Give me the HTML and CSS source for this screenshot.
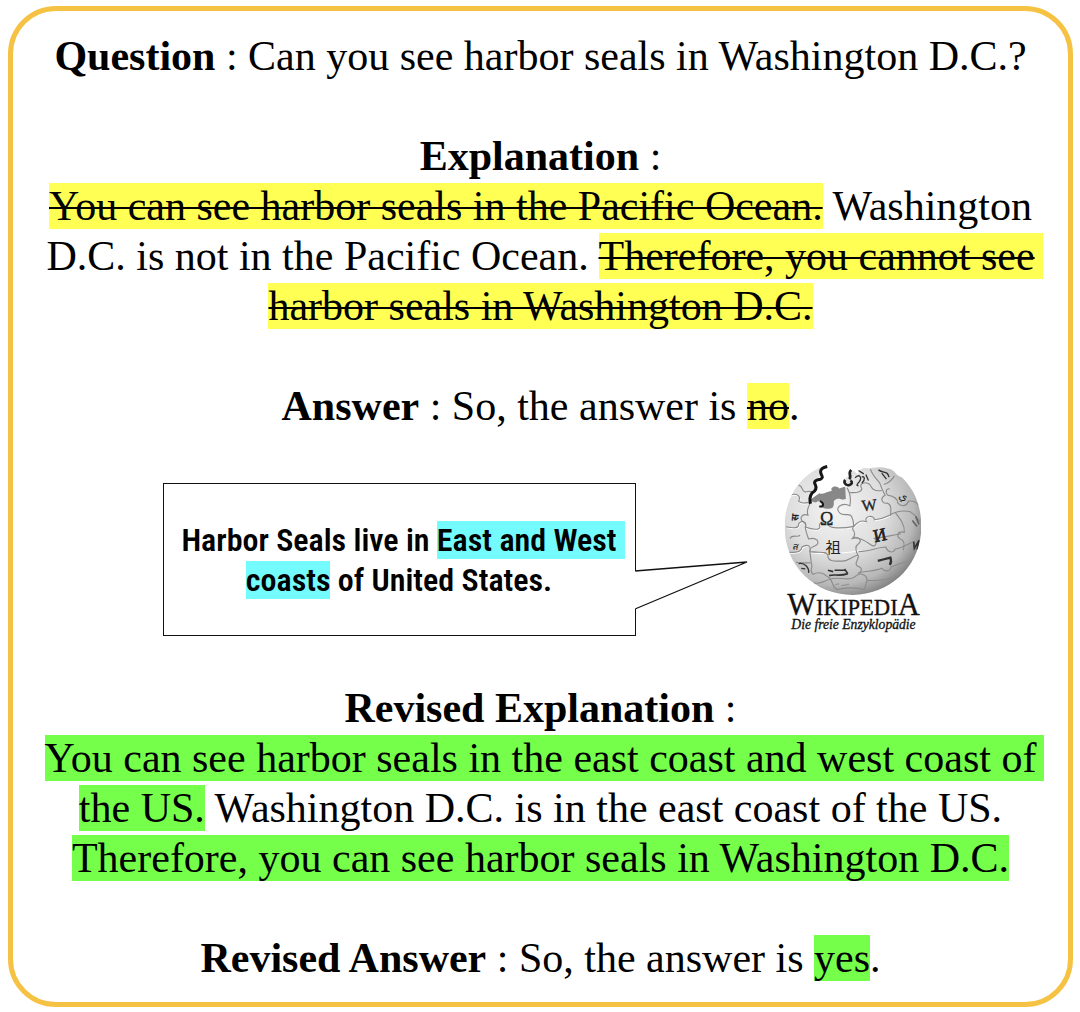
FILE: index.html
```html
<!DOCTYPE html>
<html lang="en">
<head>
<meta charset="utf-8">
<title>Harbor seals</title>
<link rel="stylesheet" href="styles.css">
</head>
<body>
<main class="card">
  <p class="block"><b>Question</b> : Can you see harbor seals in Washington D.C.?</p>

  <p class="block"><b>Explanation</b> :<br>
    <del class="wrong">You can see harbor seals in the Pacific Ocean.</del> Washington<br>
    D.C. is not in the Pacific Ocean. <del class="wrong line-end">Therefore, you cannot see</del><br>
    <del class="wrong">harbor seals in Washington D.C.</del></p>

  <p class="block"><b>Answer</b> : So, the answer is <del class="wrong">no</del>.</p>

  <section class="evidence">
    <p class="bubble">Harbor Seals live in <mark class="fact line-end">East and West</mark><br><mark class="fact">coasts</mark> of United States.</p>
    <svg class="tail" viewBox="0 0 114 52" aria-hidden="true">
      <path d="M1 11 L113 2 L1 49" fill="#fff" stroke="#111" stroke-width="1.3"/>
      <path d="M0 11.5 V48.5" stroke="#fff" stroke-width="3"/>
    </svg>
    <svg class="logo" viewBox="40 24 412 522" role="img" aria-label="Wikipedia">
      <defs>
        <radialGradient id="ball" cx="0.38" cy="0.36" r="0.7">
          <stop offset="0" stop-color="#f4f4f4"/>
          <stop offset="0.5" stop-color="#dedede"/>
          <stop offset="0.8" stop-color="#b8b8b8"/>
          <stop offset="1" stop-color="#777"/>
        </radialGradient>
        <clipPath id="globe"><path d="M150 36 C85 64 42 130 42 215 C42 335 134 420 247 420 C362 420 453 330 453 215 C453 150 430 100 394 66 C376 64 374 42 352 40 C330 32 306 38 292 40 C274 34 264 48 262 58 C246 38 234 44 232 64 C214 74 218 84 232 96 L150 124 L118 146 C112 130 120 114 134 104 C136 94 124 84 134 74 C142 66 154 66 150 54 Z"/></clipPath>
      </defs>
      <g clip-path="url(#globe)">
        <rect x="40" y="20" width="416" height="402" fill="url(#ball)"/>
        <g fill="none" stroke="#fff" stroke-width="3" transform="translate(2 3)">
          <path d="M58 120 C80 112 92 124 84 138 C98 152 108 136 118 146"/>
          <path d="M46 215 C70 220 86 220 84 206 C96 192 110 202 104 216 C126 224 146 226 148 216 C140 202 166 194 174 208 C172 222 220 220 250 214 C262 200 272 194 288 200 C278 182 312 178 312 194 C340 190 350 184 358 180"/>
          <path d="M56 292 C86 292 92 288 94 276 C110 266 122 272 118 290 C160 296 220 292 270 284"/>
        </g>
        <g fill="none" stroke="#8c8c8c" stroke-width="3.4">
          <path d="M58 120 C80 112 92 124 84 138 C98 152 108 136 118 146"/>
          <path d="M118 146 C110 160 108 168 112 180 C92 174 84 192 100 202 C108 208 106 216 104 218"/>
          <path d="M46 215 C70 220 86 220 84 206 C96 192 110 202 104 216 C126 224 146 226 148 216 C140 202 166 194 174 208 C172 222 220 220 250 214 C262 200 272 194 288 200 C278 182 312 178 312 194 C340 190 350 184 358 180"/>
          <path d="M228 96 C238 110 242 130 238 152 C214 140 190 158 208 174 C220 186 240 170 244 186 C250 200 250 214 246 222"/>
          <path d="M238 112 C260 114 274 110 274 100 C262 84 286 78 298 88 C304 100 310 110 334 106"/>
          <path d="M300 42 C306 62 320 72 328 84 C334 100 338 110 344 120 C326 130 336 146 350 144 C364 148 362 166 360 182"/>
          <path d="M372 62 C364 76 354 84 340 88 M358 102 C350 98 342 108 352 120 C376 124 382 134 382 144 C396 158 412 150 414 138 C430 136 438 140 444 150"/>
          <path d="M358 180 C382 166 402 166 420 170 C436 180 442 190 450 200 M374 172 C390 192 404 210 402 232 C380 226 376 246 394 254 C404 260 402 274 398 286"/>
          <path d="M104 218 C106 232 112 246 114 252 C132 246 148 256 140 268 C130 278 118 272 118 290 C120 304 120 312 122 322"/>
          <path d="M56 292 C86 292 92 288 94 276 C110 266 122 272 118 290 C150 294 166 288 172 300 C170 318 190 320 210 318 C230 322 236 308 262 300"/>
          <path d="M246 222 C258 236 250 246 246 250 C270 244 274 258 264 266 C252 274 256 290 264 304 C262 318 250 326 262 334 C280 340 272 350 262 360"/>
          <path d="M250 246 C280 252 290 262 302 270 C314 280 324 260 312 250 C340 248 366 240 392 236"/>
          <path d="M264 290 C296 290 324 276 346 276 C350 290 370 298 374 282 C390 282 412 266 430 260"/>
          <path d="M76 322 C96 326 122 322 122 324 C130 340 112 346 128 358 C150 346 164 360 180 372 C206 364 238 382 258 362 C270 350 294 364 288 376"/>
          <path d="M262 354 C292 348 318 348 334 340 C342 350 360 352 362 336 C382 328 398 322 414 318"/>
          <path d="M130 384 C156 390 166 372 180 374 C190 386 184 398 200 404 C226 396 260 398 280 404 C290 396 282 384 292 376 C318 378 344 376 372 366"/>
          <path d="M84 90 C98 92 92 112 106 110 C118 106 124 112 128 108 M58 250 C66 236 84 250 88 240"/>
        </g>
        <g font-family="Liberation Serif, serif" fill="#222" text-anchor="middle">
          <text x="168" y="210" font-size="54" stroke="#222">Ω</text>
          <text x="296" y="166" font-size="48" stroke="#222" transform="rotate(-6 296 150)">W</text>
          <text x="328" y="258" font-size="54" stroke="#222" stroke-width="2" transform="rotate(-12 328 240)">И</text>
          <text x="188" y="293" font-size="46" font-family="Noto Sans CJK JP, sans-serif">祖</text>
          <text x="399" y="134" font-size="34" transform="rotate(20 399 124)">ي</text>
          <text x="72" y="196" font-size="30" font-weight="bold" transform="rotate(-84 72 186)">स</text>
          <text x="76" y="284" font-size="30" transform="rotate(12 76 274)">ส</text>
        </g>
        <g fill="none" stroke="#333" stroke-width="7">
          <path d="M322 318 C342 312 352 310 360 308 C364 318 362 324 358 330"/>
          <path d="M172 346 L188 350 M176 362 C194 356 204 366 232 356 M192 346 H226 M222 342 L232 356" stroke-width="5"/>
          <path d="M84 326 C102 322 116 338 114 354 M92 340 L104 342" stroke-width="4"/>
          <path d="M426 196 L440 214 M436 184 L446 208" stroke="#666" stroke-width="5"/>
          <path d="M430 260 L432 280 L446 256 L440 284" stroke-width="5"/>
          <path d="M324 44 C340 56 350 44 356 66 M334 54 L348 72" stroke-width="4"/>
          <path d="M194 390 L206 386 M212 392 L236 388" stroke="#999" stroke-width="4"/>
        </g>
      </g>
      <path d="M116 138 C126 126 140 120 146 114 C160 120 174 106 184 108 C176 92 202 90 206 100 L224 94 L226 132 C214 136 208 128 198 132 C182 140 196 144 186 158 C176 164 158 160 150 154 C166 140 144 134 136 142 Z" fill="#888"/>
      <path d="M170 34 C160 36 150 40 150 50 C150 60 162 66 150 72 C136 74 128 78 134 88 C140 100 134 108 124 114 C116 126 116 134 120 146" fill="none" stroke="#151515" stroke-width="9"/>
      <path d="M146 154 C164 156 158 142 148 138" fill="none" stroke="#151515" stroke-width="6"/>
      <path d="M242 44 C230 56 246 62 236 72 M224 74 C218 82 226 92 236 90 C246 88 246 80 240 76" fill="none" stroke="#222" stroke-width="8"/>
      <path d="M254 68 C266 54 276 66 266 80 C260 88 256 90 264 92 M274 84 C286 74 282 60 274 66 M286 58 L294 76 M264 46 L280 56" fill="none" stroke="#333" stroke-width="4"/>
      <g font-family="Liberation Serif, serif" fill="#111">
        <text x="249" y="482" text-anchor="middle" stroke="#111"><tspan font-size="92">W</tspan><tspan font-size="68">IKIPEDI</tspan><tspan font-size="92">A</tspan></text>
        <text x="249" y="524" font-size="41" font-style="italic" stroke="#111" text-anchor="middle">Die freie Enzyklopädie</text>
      </g>
    </svg>
  </section>

  <p class="block"><b>Revised Explanation</b> :<br>
    <mark class="right line-end">You can see harbor seals in the east coast and west coast of</mark><br>
    <mark class="right">the US.</mark> Washington D.C. is in the east coast of the US.<br>
    <mark class="right">Therefore, you can see harbor seals in Washington D.C.</mark></p>

  <p class="block"><b>Revised Answer</b> : So, the answer is <mark class="right">yes</mark>.</p>
</main>
</body>
</html>
```
FILE: styles.css
```css
* { box-sizing: border-box; }

body {
  margin: 0;
  background: #fff;
  color: #000;
  font: 42px/50px "Liberation Serif", "Times New Roman", serif;
}

.card {
  display: flex;
  flex-direction: column;
  gap: 50px;
  margin: 6px 7px 6px 8px;
  padding: 20px 16px 19px;
  border: 5px solid #f6c244;
  border-radius: 48px;
  text-align: center;
}

.block {
  margin: 0;
  white-space: nowrap;
}

mark { color: inherit; }

.wrong {
  background: #ffff54;
  text-decoration-thickness: 2px;
}

.right { background: #75ff4b; }

.fact { background: #73fbfd; }

/* Highlight reaches past the last word without moving the centred line */
.line-end {
  padding-right: 8px;
  margin-right: -8px;
}

.evidence {
  display: flex;
  justify-content: center;
  align-items: flex-start;
  margin: -18px 0 -4px;
  padding-left: 2px;
}

.bubble {
  width: 473px;
  margin: 20px 0 0;
  padding: 36px 0 35px;
  border: 1px solid #111;
  font: 600 32px/40px "Roboto Condensed", "Liberation Sans Narrow", "Arial Narrow", sans-serif;
  white-space: nowrap;
}

.tail {
  width: 114px;
  height: 52px;
  margin: 97px 36px 0 -2px;
}

.logo {
  width: 137px;
  height: 174px;
}
```
